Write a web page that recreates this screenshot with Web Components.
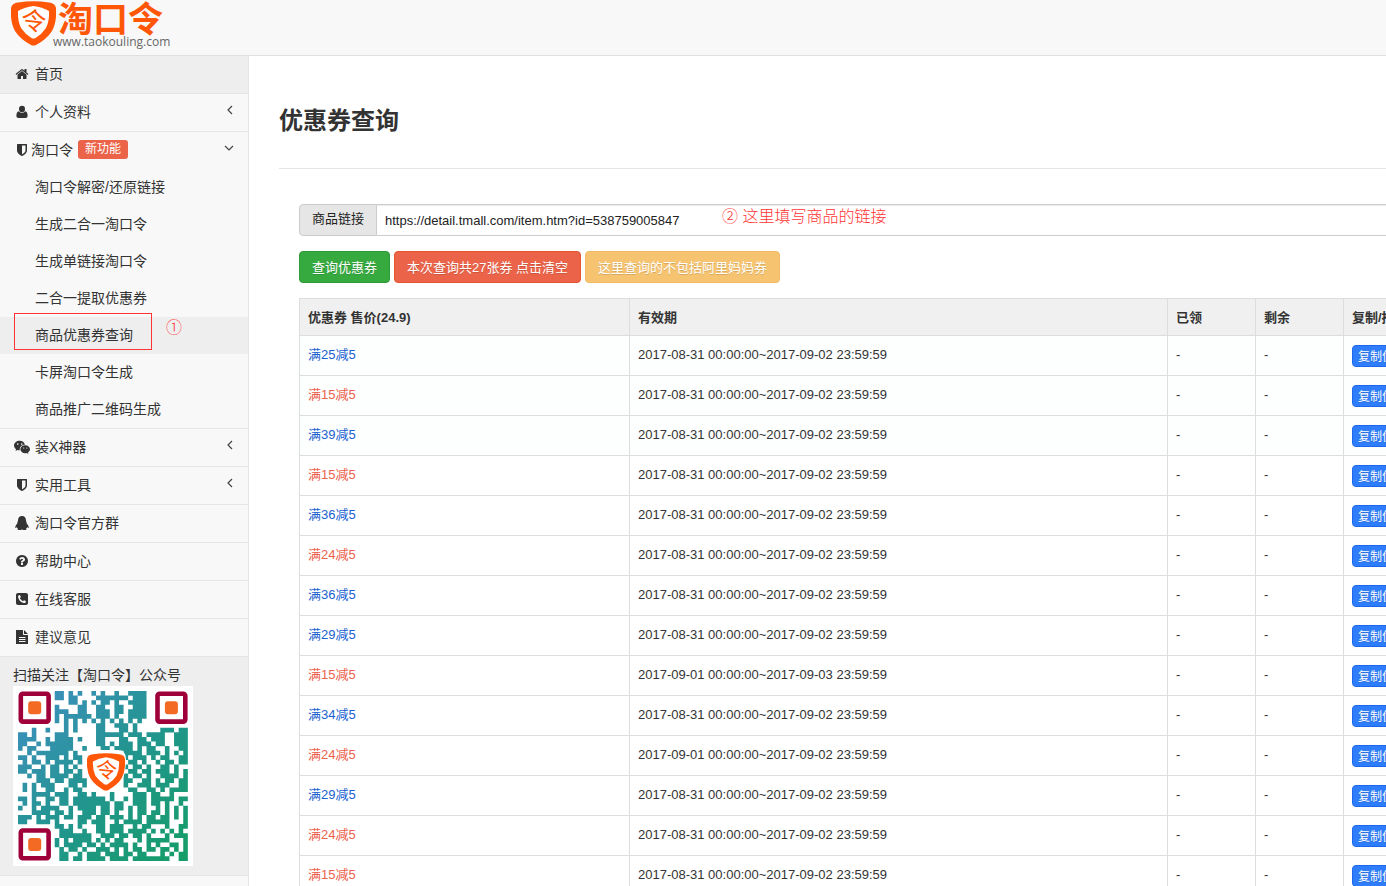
<!DOCTYPE html>
<html lang="zh-CN">
<head>
<meta charset="utf-8">
<title>优惠券查询 - 淘口令</title>
<style>
html{scrollbar-width:none;background:#f8f8f8}
body{margin:0;font-family:"Liberation Sans","Noto Sans CJK SC",sans-serif;font-size:13px;line-height:20px;color:#333}
</style>
</head>
<body>
<tkl-app></tkl-app>
<script>
const define = (name, html, init) => {
  const t = document.createElement('template');
  t.innerHTML = html;
  customElements.define(name, class extends HTMLElement {
    constructor() {
      super();
      this.attachShadow({mode: 'open'}).append(t.content.cloneNode(true));
    }
    connectedCallback() { if (init && !this.ready) { this.ready = true; init.call(this, this.shadowRoot); } }
  });
};

const ICONS = {
  home: ['0 0 1792 1792', '<path d="M1472 992v480q0 26-19 45t-45 19h-384v-384h-256v384h-384q-26 0-45-19t-19-45v-480q0-1 .5-3t.5-3l575-474 575 474q1 2 1 6zm223-69l-62 74q-8 9-21 11h-3q-13 0-21-7l-692-577-692 577q-12 8-24 7-13-2-21-11l-62-74q-8-10-7-23.5t11-21.5l719-599q32-26 76-26t76 26l244 204v-195q0-14 9-23t23-9h192q14 0 23 9t9 23v408l219 182q10 8 11 21.5t-7 23.5z"/>'],
  shield: ['0 0 1792 1792', '<path d="M1344 960v-640h-448v1137q119-63 213-137 235-184 235-360zm192-768v768q0 86-33.500 170.500t-83 150-118 127.500-126.500 103-121 77.500-89.500 49.500-42.500 20q-12 6-26 6t-26-6q-16-7-42.500-20t-89.500-49.500-121-77.500-126.500-103-118-127.500-83-150-33.500-170.500v-768q0-26 19-45t45-19h1152q26 0 45 19t19 45z"/>'],
  help: ['0 0 1792 1792', '<path d="M1024 1376v-192q0-14-9-23t-23-9h-192q-14 0-23 9t-9 23v192q0 14 9 23t23 9h192q14 0 23-9t9-23zm256-672q0-88-55.500-163t-138.500-116-170-41q-243 0-371 213-15 24 8 42l132 100q7 6 19 6 16 0 25-12 53-68 86-92 34-24 86-24 48 0 85.500 26t37.500 59q0 38-20 61t-68 45q-63 28-115.500 86.500t-52.500 125.500v36q0 14 9 23t23 9h192q14 0 23-9t9-23q0-19 21.500-49.500t54.500-49.500q32-18 49-28.500t46-35 44.500-48 28-60.500 12.500-81zm384 192q0 209-103 385.500t-279.500 279.500-385.500 103-385.500-103-279.500-279.500-103-385.500 103-385.500 279.500-279.500 385.500-103 385.500 103 279.500 279.500 103 385.500z"/>'],
  user: ['0 0 14 14', '<ellipse cx="7" cy="4" rx="3" ry="3.3"/><path d="M3.9 6.3C2 6.700 1.400 8.500 1.400 10.800 1.400 12.200 2.200 13 3.500 13h7c1.300 0 2.100-.8 2.100-2.200 0-2.300-.6-4.100-2.500-4.500-1.600 2-4.600 2-6.200 0z"/>'],
  wechat: ['0 0 16 14', '<path fill-rule="evenodd" d="M5.700.8C2.600.8 0 2.900 0 5.600c0 1.500.8 2.800 2.100 3.700l-.6 1.700 2-1c.9.200 1.500.300 2.400.3-.8-3 1.700-5.600 5-5.600C10.400 2.400 8.200.8 5.700.8zM3.800 3.300a.8.8 0 110 1.600.8.800 0 010-1.600zm4 0a.8.8 0 110 1.600.8.800 0 010-1.600z"/><path fill-rule="evenodd" d="M11.200 5.300c-2.700 0-4.800 1.800-4.800 4s2.100 4 4.800 4c.6 0 1.100-.1 1.600-.3l1.600.9-.4-1.500c1.200-.8 2-1.900 2-3.100 0-2.200-2.100-4-4.800-4zM9.700 7.400a.6.6 0 110 1.200.6.600 0 010-1.200zm3.100 0a.6.6 0 110 1.200.6.600 0 010-1.200z"/>'],
  qq: ['0 0 14 14', '<path d="M7 0C4.400 0 3 2 3 4.600c0 .8-.4 1.100-.6 1.800-.1.400.1.700-.1 1.200C1.100 8.800.2 10.500.3 11.600c.1.900.9.500 1.500-.5.2.7.600 1.300 1.100 1.700-.7.500-.4 1.200.6 1.200h2.200c.6 0 .8-.4 1.300-.4s.7.400 1.300.4h2.200c1 0 1.300-.7.600-1.200.5-.4.9-1 1.100-1.700.6 1 1.400 1.400 1.500.5.1-1.100-.8-2.800-2-4-.2-.5 0-.8-.1-1.200-.2-.7-.6-1-.6-1.800C11 2 9.600 0 7 0z"/>'],
  phone: ['0 0 14 14', '<path fill-rule="evenodd" d="M3.200 1h7.600C12.200 1 13 1.800 13 3.200v7.600c0 1.400-.8 2.200-2.200 2.200H3.200C1.800 13 1 12.200 1 10.800V3.200C1 1.800 1.800 1 3.200 1zM4.600 3C3.600 3.300 3 4 3.100 5c.3 2.900 3 5.700 5.900 6 1 .1 1.800-.5 2-1.600 0-.3-1.700-1.300-2-1.200-.4.1-.7 1-1 1-.9-.2-2.900-2.100-3.100-3.100 0-.4 1-.7 1-1.100C5.900 4.700 5 3 4.600 3z"/>'],
  file: ['0 0 14 14', '<path fill-rule="evenodd" d="M1 0h7v4.200c0 .5.300.8.800.8H13v9H1zM4 7v1h6.500V7zm0 2v1h6.500V9zm0 2v1h6.500v-1z"/><path d="M9 0l4 4H9z"/>']
};
define('tkl-icon', `<style>
:host{display:inline-flex;width:18px;height:14px;justify-content:center;flex:none}
svg{height:14px;width:auto;fill:#333;overflow:visible;flex:none}
</style><svg aria-hidden="true"></svg>`, function (r) {
  const [box, body] = ICONS[this.getAttribute('name')];
  const s = r.querySelector('svg');
  s.setAttribute('viewBox', box);
  s.innerHTML = body;
});

define('tkl-emblem', `<style>
:host{display:block;width:45px;height:45px}
svg{display:block;width:100%;height:100%}
text{font:400 25px "Noto Sans CJK SC",sans-serif;fill:#ff5608}
</style><svg viewBox="0 0 45 45" aria-hidden="true">
<path d="M0 7Q1 2 7 1.500 15 .2 22.500.2T38 1.500q6 .5 7 5.500 1 14-4 23-5 8-16 14-2.500 1-5 0Q9 38 4 30-1 21 0 7z" fill="#ff5608"/>
<path d="M7 10q7-4 15.500-5Q31 6 38 10q.5 10-3 17-4 6-10.500 10-2 1-4 0Q14 33 10 27 6.500 20 7 10z" fill="#fff"/>
<text x="10" y="29" transform="rotate(6 22 22)">令</text></svg>`);

define('tkl-header', `<style>
:host{display:block;height:55px;border-bottom:1px solid #e0e0e0;background:#f8f8f8}
a{display:flex;width:max-content;padding:1px 0 0 11px;text-decoration:none}
.words{display:flex;flex-direction:column;margin-left:-3px}
b{font:700 35px/31px "Noto Sans CJK SC",sans-serif;color:#ff5608;padding-left:5px}
small{font:12px/20px "Open Sans",sans-serif;color:#666}
</style><a href="#"><tkl-emblem></tkl-emblem><span class="words"><b>淘口令</b><small>www.taokouling.com</small></span></a>`);

define('nav-item', `<style>
:host{display:block;border-bottom:1px solid #e5e5e5}
a{display:flex;align-items:center;box-sizing:border-box;height:37px;padding:0 14px 2px 13px;color:#333;text-decoration:none;font-size:14px;line-height:20px}
:host([active]) a{background:#eee}
.t{margin-left:4px}
:host([tight]) .t{margin-left:0}
.badge{margin-left:5px;background:#eb6349;color:#fff;font-size:12px;line-height:19px;padding:0 7px;border-radius:3px}
.badge:empty{display:none}
.c{margin-left:auto;width:10px;height:10px;padding-bottom:4px;fill:none;stroke:#444;stroke-width:1.200;display:none}
:host([chevron]) .c{display:block}
:host([chevron=left]) .d,:host([chevron=down]) .l{display:none}
</style><a href="#"><span class="t"><slot></slot></span><span class="badge"></span><svg class="c" viewBox="0 0 10 10" aria-hidden="true"><path class="l" d="M8 1L4 5l4 4"/><path class="d" d="M1 3l4 4 4-4"/></svg></a><slot name="sub"></slot>`, function (r) {
  const icon = document.createElement('tkl-icon');
  icon.setAttribute('name', this.getAttribute('icon'));
  r.querySelector('a').prepend(icon);
  r.querySelector('.badge').textContent = this.getAttribute('badge') || '';
});

define('nav-sub', `<style>
:host{display:block;position:relative}
a{display:block;padding:0 0 0 35px;font-size:14px;line-height:37px;color:#333;text-decoration:none}
:host([active]) a{background:#eee}
</style><a href="#"><slot></slot></a>`);

define('step-mark', `<style>
:host{position:absolute;color:#f33;font:300 16px/20px "Liberation Sans","Noto Sans CJK SC",sans-serif;white-space:nowrap;pointer-events:none}
</style><slot></slot>`);

define('qr-code', `<style>
:host{display:block;width:180px;height:180px;background:#fff;position:relative}
svg{display:block;width:180px;height:180px}
.logo{position:absolute;inset:67px auto auto 74px;width:38px;height:38px}
</style><svg viewBox="-5 -5 180 180" role="img" aria-label="公众号二维码">
<defs><linearGradient id="g" x1="0" y1="0" x2="170" y2="170" gradientUnits="userSpaceOnUse"><stop offset="0" stop-color="#418fc4"/><stop offset=".5" stop-color="#22958f"/><stop offset="1" stop-color="#159d66"/></linearGradient></defs>
<path class="m" fill="url(#g)"/><g class="f"></g></svg><tkl-emblem class="logo"></tkl-emblem>`, function (r) {
  const e = '........', rows = [
    e + '##.#.#..#.#..#..####.', e + '##.##....#######.###.', e + '...##.#.#.##.#..####.', e + '#....##..##..##..###.',
    e + '###..##..###.##.####.', e + '#.######.###.#..####.', e + '#.#.#.#.#.#.#.#.#.#.', e + '..#.#....##..###.#...',
    '...#..#...#.#....##...##.#.....###.##', '##.#....###......######.###.####..###', '####..#.####.#...##...##..##.###..###',
    '##..#.######.....##.#.###.###.##..###', '#.##...#####..#...##.####.#.##..#..##', '..#.#######.#..........####.###.#.#.#',
    '##.#..###.#.##.........#.###.#.##..##', '.#.##.#.####.#..........##.#..#.##.##', '###..#.##.#.#..........#.##.#..##.#..',
    '##.###.##.##.#..........##.##.###.#.#', '..#.##.####.##.........#.##.#..####.#', '....###.##.####........##..##.#.##.##',
    '.#.#.###...##.#........#..###.###..##', '.#.#..##..#.##..........##..##.#.####', '...####.###..##.#...#....###.##..#...',
    '##.#..##.##.#######.#..#.###.#####.##', '.#.##.#..##.########.##..###.##.#..#.', '#..#.####..#.####.##.##.#.##..#.#.#.#',
    '...####.##.#..###.##.#..#.##.##.#.#.#', '###.#.###.##.###.##.###.#.#.##.##.#.#', '##..###.#....##.###..#.####.#####...#',
    e + '##.#.#...##.###..#.##...#..##', e + '.###..#..##.###.####.#.#.#.#.', e + '.#######..###.##.##.#...#.###', e + '#.#.####.#.#.##...#.#####...#',
    e + '#.####.##.#.####.#..#.#..##.#', e + '.#.##.#..###.#.#.##.##.##.#.#', e + '.##..#.###.###.##.##...#.#.##', e + '.##.##.####.####.########..##'];
  const m = 4.59;
  let d = '';
  rows.forEach((row, y) => row.replace(/#+/g, (run, x) => {
    d += `M${x * m} ${y * m}h${run.length * m}v${m + .1}h${-run.length * m}z`;
  }));
  r.querySelector('.m').setAttribute('d', d);
  r.querySelector('.f').innerHTML = [[0, 0], [30 * m - 1, 0], [0, 30 * m - 1]].map(([x, y]) =>
    `<rect x="${x + 2.800}" y="${y + 2.800}" width="27.800" height="27.800" rx="2" fill="#fff" stroke="#a0003a" stroke-width="4.600"/><rect x="${x + 10.200}" y="${y + 10.200}" width="13" height="13" rx="3" fill="#f26a24"/>`).join('')
    + '<path fill="#fff" d="M75 59h24q9 0 9 9 0 24-13 32H79q-12-9-12-32 0-9 8-9z"/>';
});

define('tkl-sidebar', `<style>
:host{display:block;width:248px;flex:none;border-right:1px solid #e5e5e5;background:#f8f8f8}
nav-sub[active]{z-index:1}
.box{position:absolute;inset:-4px auto auto 14px;width:136px;height:35px;border:1px solid #f33;pointer-events:none}
step-mark{inset:1px auto auto 166px}
.follow{background:#eee;border-bottom:1px solid #e5e5e5;padding:8px 13px 9px;font-size:14px;line-height:21px}
</style><nav>
<nav-item icon="home" active>首页</nav-item>
<nav-item icon="user" chevron="left">个人资料</nav-item>
<nav-item icon="shield" chevron="down" badge="新功能" tight>淘口令<div slot="sub">
<nav-sub>淘口令解密/还原链接</nav-sub><nav-sub>生成二合一淘口令</nav-sub><nav-sub>生成单链接淘口令</nav-sub><nav-sub>二合一提取优惠券</nav-sub>
<nav-sub active>商品优惠券查询<span class="box"></span><step-mark>①</step-mark></nav-sub>
<nav-sub>卡屏淘口令生成</nav-sub><nav-sub>商品推广二维码生成</nav-sub></div></nav-item>
<nav-item icon="wechat" chevron="left">装X神器</nav-item>
<nav-item icon="shield" chevron="left">实用工具</nav-item>
<nav-item icon="qq">淘口令官方群</nav-item>
<nav-item icon="help">帮助中心</nav-item>
<nav-item icon="phone">在线客服</nav-item>
<nav-item icon="file">建议意见</nav-item>
</nav><div class="follow">扫描关注【淘口令】公众号<qr-code></qr-code></div>`);

define('link-field', `<style>
:host{display:flex;height:32px;position:relative}
label{box-sizing:border-box;background:#e6e6e6;border:1px solid #ccc;border-radius:4px 0 0 4px;padding:4px 12px;line-height:20px;color:#222;flex:none}
input{box-sizing:border-box;flex:1;min-width:0;border:1px solid #ccc;border-left:0;border-radius:0 4px 4px 0;box-shadow:inset 0 1px 1px rgba(0,0,0,.08);padding:0 8px;font:13px "Liberation Sans",sans-serif;color:#222;background:#fff}
step-mark{inset:3px auto auto 423px}
</style><label for="url">商品链接</label><input id="url" type="text" value="https://detail.tmall.com/item.htm?id=538759005847"><step-mark>② 这里填写商品的链接</step-mark>`);

define('tkl-button', `<style>
:host{display:inline-block}
button{box-sizing:border-box;display:block;height:32px;padding:1px 12px 0;border:1px solid #2f9a38;border-radius:4px;background:#36a93f;color:#fff;font:inherit;white-space:nowrap;text-shadow:0 1px 0 rgba(0,0,0,.15)}
:host([kind=danger]) button{background:#eb6349;border-color:#e5532f}
:host([kind=warn]) button{background:#f6c371;border-color:#f3bb63}
:host([kind=copy]) button{height:22px;padding:1px 5px 0;font-size:12px;line-height:18px;background:#2f7dfa;border-color:#1c68ec}
</style><button type="button"><slot></slot></button>`);

define('coupon-table', `<style>
:host{display:block}
table{border-collapse:collapse;width:100%;table-layout:fixed}
th,td{border:1px solid #ddd;padding:9px 8px 7px;text-align:left;vertical-align:top;line-height:20px}
td{height:23px;background:#fdfefe}
tbody tr:nth-child(n+4) td{background:#fff}
th{background:#f0f0f0}
a{color:#1a5fd0;text-decoration:none}
a.red{color:#eb5f4c}
tkl-button{vertical-align:top}
td:last-child{padding-bottom:0}
</style><table><colgroup><col style="width:330px"><col><col style="width:88px"><col style="width:88px"><col style="width:96px"></colgroup>
<thead><tr><th>优惠券 售价(24.9)</th><th>有效期</th><th>已领</th><th>剩余</th><th>复制/推广</th></tr></thead><tbody></tbody></table>`, function (r) {
  const a = '2017-08-31 00:00:00~2017-09-02 23:59:59', b = '2017-09-01 00:00:00~2017-09-03 23:59:59', c = '2017-09-01 00:00:00~2017-09-02 23:59:59';
  r.querySelector('tbody').innerHTML = [[25, 0, a], [15, 1, a], [39, 0, a], [15, 1, a], [36, 0, a], [24, 1, a], [36, 0, a], [29, 0, a],
    [15, 1, b], [34, 0, a], [24, 1, c], [29, 0, a], [24, 1, a], [15, 1, a]].map(([n, red, t]) =>
    `<tr><td><a href="#"${red ? ' class="red"' : ''}>满${n}减5</a></td><td>${t}</td><td>-</td><td>-</td><td><tkl-button kind="copy">复制优惠券</tkl-button></td></tr>`).join('');
});

define('tkl-app', `<style>
:host{display:block}
.body{display:flex}
main{flex:1;min-width:0;overflow:hidden;background:#fff;padding-left:30px}
h1{margin:0;padding:47px 0 29px;font-size:24px;line-height:36px;border-bottom:1px solid #e5e5e5}
.panel{padding:35px 0 0 20px;width:calc(100% + 34px);display:grid;gap:15px}
.actions{display:flex;gap:4px}
</style><tkl-header></tkl-header><div class="body"><tkl-sidebar></tkl-sidebar><main><h1>优惠券查询</h1>
<div class="panel"><link-field></link-field>
<div class="actions"><tkl-button>查询优惠券</tkl-button><tkl-button kind="danger">本次查询共27张券 点击清空</tkl-button><tkl-button kind="warn">这里查询的不包括阿里妈妈券</tkl-button></div>
<coupon-table></coupon-table></div></main></div>`);
</script>
</body>
</html>
